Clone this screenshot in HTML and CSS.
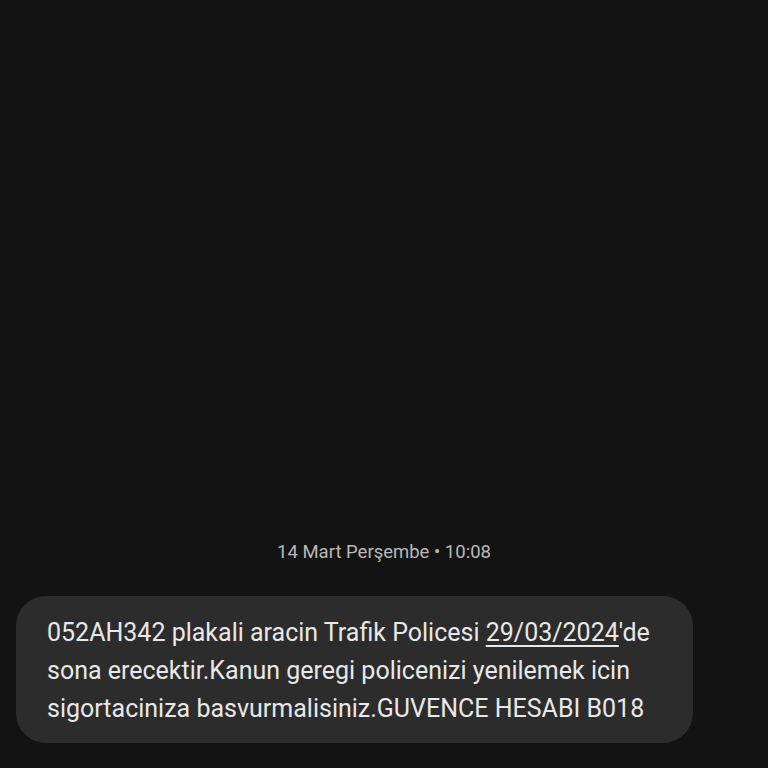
FILE: index.html
```html
<!DOCTYPE html>
<html>
<head>
  <meta charset="UTF-8">
  <link rel="stylesheet" href="styles.css">
</head>
<body>
  <div class="thread">
    <div class="timestamp">14 Mart Perşembe • 10:08</div>
    <div class="bubble">
      <p class="message">052AH342 plakali aracin Trafik Policesi <span class="date-link">29/03/2024</span>'de sona erecektir.Kanun geregi policenizi yenilemek icin sigortaciniza basvurmalisiniz.GUVENCE HESABI B018</p>
    </div>
  </div>
</body>
</html>
```

FILE: styles.css
```css
html, body {
  margin: 0;
  height: 100%;
}

body {
  background: #131313;
  color: #e8e8e8;
  font-family: Roboto, "Noto Sans", sans-serif;
  overflow: hidden;
}

.thread {
  height: 100%;
  box-sizing: border-box;
  display: flex;
  flex-direction: column;
  justify-content: flex-end;
  padding: 0 75px 25px 16px;
}

.timestamp {
  text-align: center;
  font-size: 18.5px;
  line-height: 24px;
  color: #b9b9b9;
  margin-bottom: 32px;
  padding-left: 59px;
}

.bubble {
  background: #2c2c2c;
  border-radius: 30px;
  padding: 18px 16px 15px 31px;
}

.message {
  margin: 0;
  font-size: 25px;
  line-height: 38px;
}

.date-link {
  text-decoration: underline;
  text-decoration-thickness: 2px;
  text-underline-offset: 4px;
}
```
